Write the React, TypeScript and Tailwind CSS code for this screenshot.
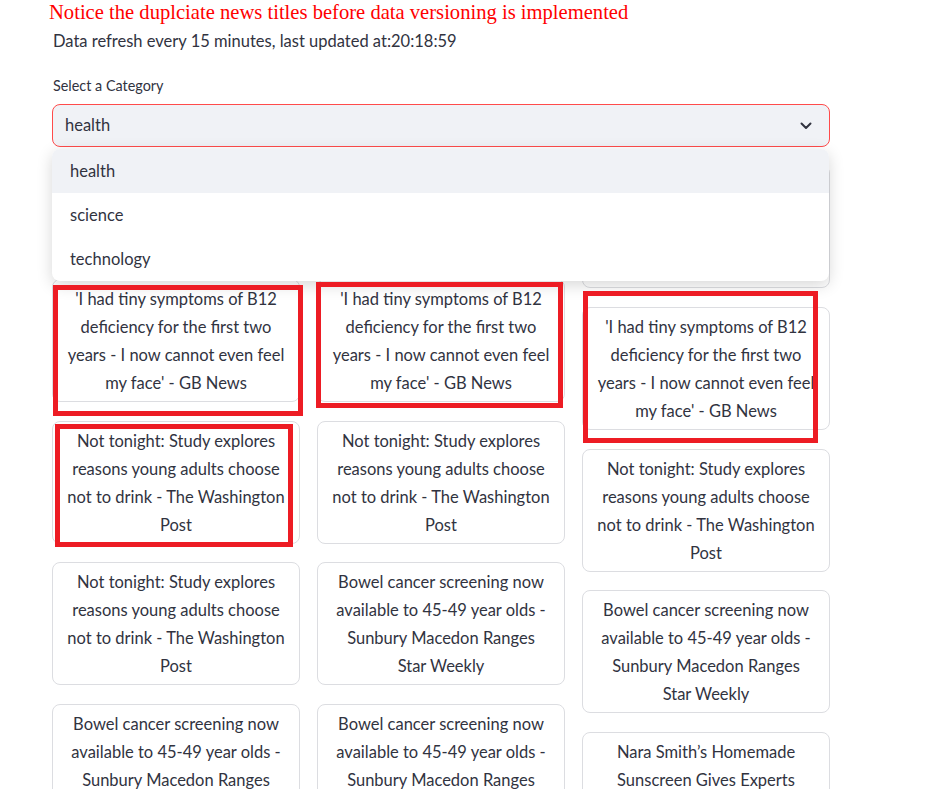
const sans = "font-['Source_Sans_Pro','Lato',sans-serif]";

type Card = { lines: string[] };

const b12: Card = {
  lines: ["'I had tiny symptoms of B12", "deficiency for the first two", "years - I now cannot even feel", "my face' - GB News"],
};
const notTonight: Card = {
  lines: ["Not tonight: Study explores", "reasons young adults choose", "not to drink - The Washington", "Post"],
};
const bowel: Card = {
  lines: ["Bowel cancer screening now", "available to 45-49 year olds -", "Sunbury Macedon Ranges", "Star Weekly"],
};
const nara: Card = {
  lines: ["Nara Smith\u2019s Homemade", "Sunscreen Gives Experts", "Cause for Concern - Yahoo", "Lifestyle"],
};

const columns: Card[][] = [
  [{ lines: ["New study links daily walks to", "lower blood pressure - Health", "News"] }, b12, notTonight, notTonight, bowel],
  [{ lines: ["Doctors warn of rising flu", "cases this winter - BBC", "News"] }, b12, notTonight, bowel, bowel],
  [
    { lines: ["What to know about the new", "COVID variant spreading", "across the country - The", "New York Times"] },
    b12,
    notTonight,
    bowel,
    nara,
  ],
];

const categories = ["health", "science", "technology"];

// annotation boxes drawn on top of the screenshot
const marks = [
  "left-[53px] top-[285px] w-[250px] h-[131px]",
  "left-[316px] top-[282px] w-[247px] h-[126px]",
  "left-[55px] top-[424px] w-[238px] h-[123px]",
  "left-[583px] top-[291px] w-[235px] h-[152px]",
];

function NewsCard({ card }: { card: Card }) {
  return (
    <div className="rounded-lg border border-[#dcdde1] bg-white pt-[5px] pb-[4px] text-center text-[16.5px] leading-[28px]">
      {card.lines.map((line, i) => (
        <div key={i} className="whitespace-nowrap">
          {line}
        </div>
      ))}
    </div>
  );
}

export default function App() {
  return (
    <div className={`relative h-[789px] overflow-hidden bg-white text-[#31333f] ${sans}`}>
      <div className="ml-[52px] w-[778px]">
        <p className="-ml-[3px] font-['Liberation_Serif',serif] text-[20.6px] leading-[24px] text-[#ff0000]">
          Notice the duplciate news titles before data versioning is implemented
        </p>
        <p className="ml-[1px] mt-[4.5px] text-[16.5px] leading-[24px]">Data refresh every 15 minutes, last updated at:20:18:59</p>
        <label className="ml-[1px] mt-[23px] block text-[14.4px] leading-[20px]">Select a Category</label>

        <div className="relative mt-[8.5px]">
          <div className="flex h-[43px] items-center justify-between rounded-lg border border-[#ff4b4b] bg-[#f0f2f6] pl-[12px] pr-[17px] text-[16.5px]">
            <span>health</span>
            <svg width="12" height="8" viewBox="0 0 12 8" fill="none">
              <path d="M1.5 1.5 L6 6 L10.5 1.5" stroke="#31333f" strokeWidth="2" strokeLinecap="round" strokeLinejoin="round" />
            </svg>
          </div>
          <ul className="absolute left-0 right-[1px] top-[45px] z-10 overflow-hidden rounded-lg bg-white py-0 text-[16.5px] shadow-[0_4px_16px_rgba(0,0,0,0.16)]">
            {categories.map((c, i) => (
              <li key={c} className={`flex h-[44px] items-center pl-[18px] ${i === 0 ? "bg-[#f0f2f6]" : ""}`}>
                {c}
              </li>
            ))}
          </ul>
        </div>

        <div className="mt-[18.3px] grid grid-cols-3 items-start gap-x-[17px]">
          {columns.map((col, ci) => (
            <div key={ci} className="flex flex-col gap-[18.7px]">
              {col.map((card, i) => (
                <NewsCard key={i} card={card} />
              ))}
            </div>
          ))}
        </div>
      </div>

      {marks.map((m, i) => (
        <div key={i} className={`pointer-events-none absolute z-20 border-[5px] border-[#ed1c24] ${m}`} />
      ))}
    </div>
  );
}
